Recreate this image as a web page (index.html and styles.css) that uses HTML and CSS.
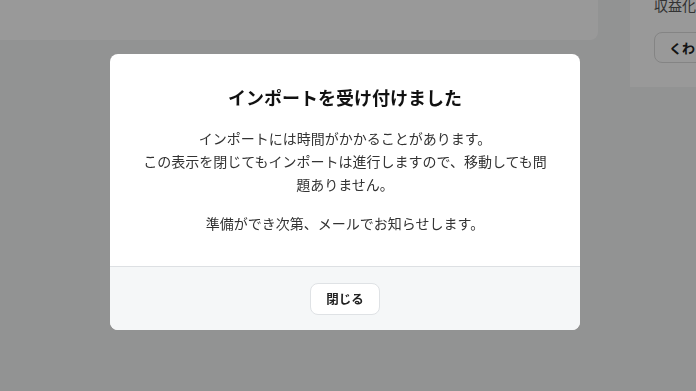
FILE: index.html
```html
<!DOCTYPE html>
<html lang="ja">
<head>
<meta charset="utf-8">
<link rel="stylesheet" href="styles.css">
</head>
<body>
<div class="page">
  <div class="main">
    <div class="card"></div>
  </div>
  <aside class="side">
    <div class="side-title">収益化</div>
    <button class="side-btn">くわしく</button>
  </aside>
</div>
<div class="overlay">
  <div class="modal">
    <div class="modal-body">
      <h2 class="modal-title">インポートを受け付けました</h2>
      <p class="modal-text">インポートには時間がかかることがあります。<br>この表示を閉じてもインポートは進行しますので、移動しても問題ありません。</p>
      <p class="modal-text">準備ができ次第、メールでお知らせします。</p>
    </div>
    <div class="modal-footer">
      <button class="close-btn">閉じる</button>
    </div>
  </div>
</div>
</body>
</html>
```

FILE: styles.css
```css
* { box-sizing: border-box; }
html, body { margin: 0; height: 100%; }
body {
  font-family: "Noto Sans CJK JP", "Noto Sans", sans-serif;
  background: #f4f5f6;
  overflow: hidden;
}
.page {
  display: flex;
  gap: 32px;
  height: 100%;
}
.main { flex: 1; }
.card {
  height: 40px;
  background: #fff;
  border-radius: 0 0 8px 0;
}
.side {
  width: 66px;
  height: 87px;
  background: #fff;
  padding: 0 0 0 24px;
  overflow: hidden;
  white-space: nowrap;
}
.side-title {
  font-size: 14px;
  color: #555;
  line-height: 12px;
  margin-top: -1px;
}
.side-btn {
  margin-top: 21px;
  height: 31px;
  padding: 0 14px;
  border: 1px solid #ddd;
  border-radius: 8px;
  background: #fff;
  font-family: inherit;
  font-weight: bold;
  font-size: 13px;
  color: #222;
}
.overlay {
  position: fixed;
  inset: 0;
  background: rgba(0, 0, 0, 0.4);
  display: flex;
  justify-content: center;
  align-items: flex-start;
  padding: 54px 6px 0 0;
}
.modal {
  width: 470px;
  background: #fff;
  border-radius: 8px;
  overflow: hidden;
}
.modal-body {
  padding: 30px 30px 31px;
  text-align: center;
}
.modal-title {
  margin: 0 0 16px;
  font-size: 18px;
  line-height: 27px;
  font-weight: bold;
  color: #111;
}
.modal-text {
  margin: 0;
  font-size: 14px;
  line-height: 23px;
  color: #333;
}
.modal-text + .modal-text { margin-top: 16px; }
.modal-footer {
  border-top: 1px solid #dde0e3;
  background: #f5f7f8;
  padding: 16px 0 15px;
  display: flex;
  justify-content: center;
  align-items: center;
}
.close-btn {
  width: 70px;
  height: 32px;
  border: 1px solid #dfe2e5;
  border-radius: 8px;
  background: #fff;
  font-family: inherit;
  font-size: 12.5px;
  font-weight: bold;
  color: #222;
  padding: 0;
  line-height: 1;
}
```
